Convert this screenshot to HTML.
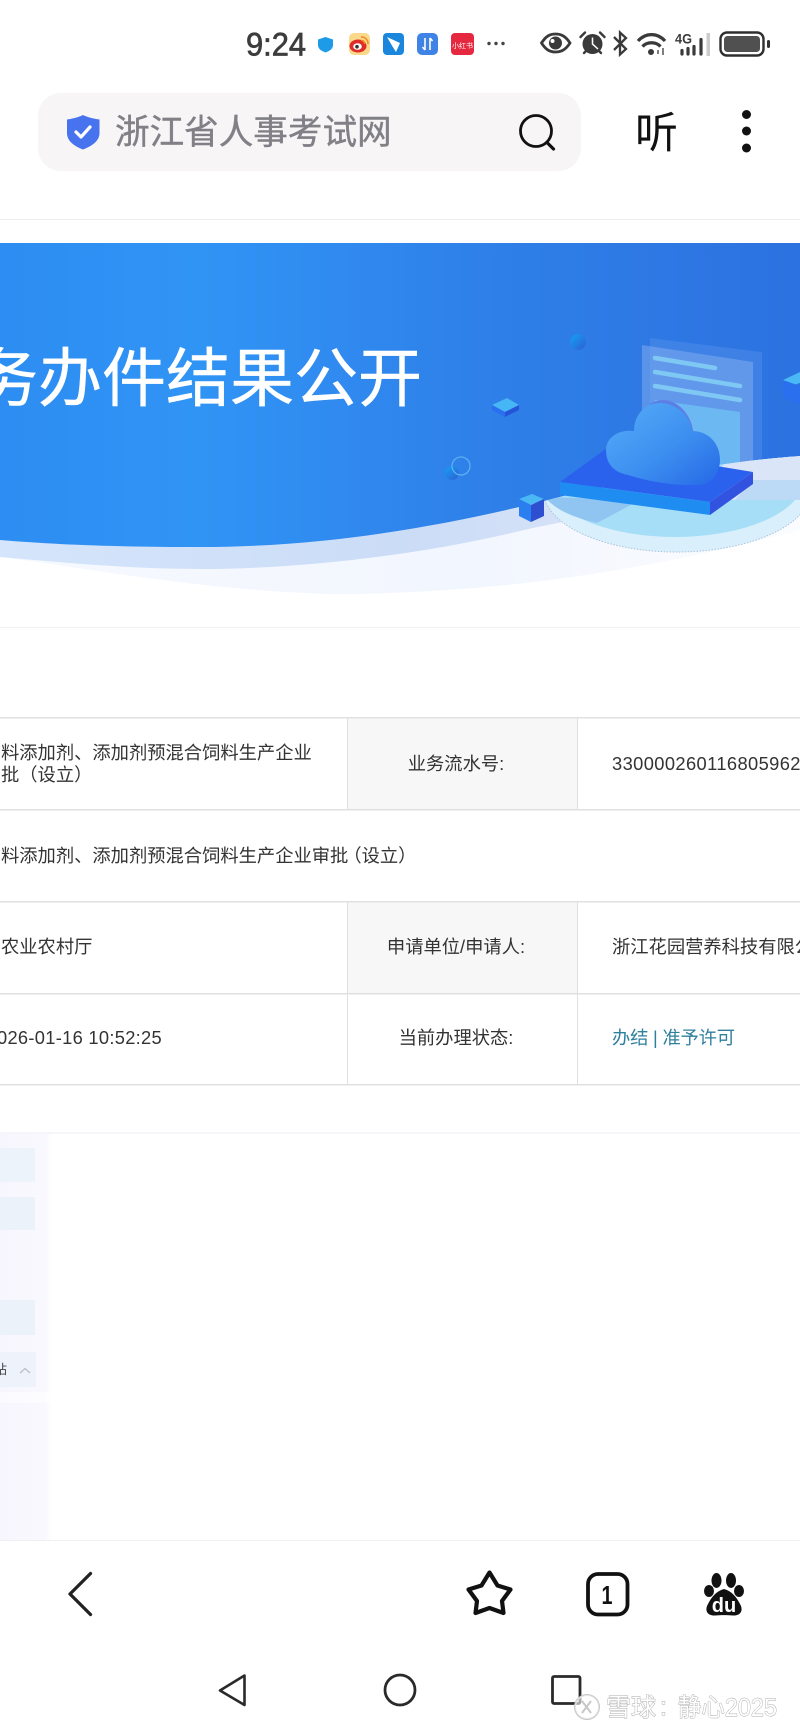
<!DOCTYPE html>
<html lang="zh-CN"><head><meta charset="utf-8"><title>浙江省人事考试网</title>
<style>html,body{margin:0;padding:0;background:#fff;width:800px;height:1732px;overflow:hidden}
svg{display:block}text{font-family:"Liberation Sans","Noto Sans CJK SC",sans-serif}</style></head>
<body>
<svg width="800" height="1732" viewBox="0 0 800 1732" xmlns="http://www.w3.org/2000/svg">
<defs>
<linearGradient id="bl" x1="0" x2="1" y1="0" y2="0"><stop offset="0" stop-color="#2d8df2"/><stop offset=".25" stop-color="#3094f5"/><stop offset=".6" stop-color="#2f80e9"/><stop offset="1" stop-color="#2c72e0"/></linearGradient>
<linearGradient id="cl" x1="0" x2="1" y1="0" y2="1"><stop offset="0" stop-color="#56aef7"/><stop offset=".55" stop-color="#3d8ff0"/><stop offset="1" stop-color="#2568e6"/></linearGradient>
<linearGradient id="lav" x1="0" x2="1" y1="0" y2="0"><stop offset="0" stop-color="#d5e5fb"/><stop offset=".5" stop-color="#cbdcf7"/><stop offset="1" stop-color="#e2e9f8"/></linearGradient>
<linearGradient id="pale" x1="0" x2="1" y1="0" y2="0"><stop offset="0" stop-color="#f6f9ff"/><stop offset=".6" stop-color="#f2f6fe"/><stop offset="1" stop-color="#fbfcff"/></linearGradient>
<linearGradient id="side" x1="0" x2="1" y1="0" y2="0"><stop offset="0" stop-color="#f7f6fe"/><stop offset=".88" stop-color="#f9f8fe"/><stop offset="1" stop-color="#fff"/></linearGradient>
<linearGradient id="ball" x1="0" x2="1" y1="0" y2="1"><stop offset="0" stop-color="#14a0f4"/><stop offset="1" stop-color="#2f5fd4"/></linearGradient>
<clipPath id="cb"><path d="M0 243H800V456C720 462 650 475 560 497C450 525 330 547 200 547C120 547 60 545 0 540Z"/></clipPath>
<clipPath id="cr"><path d="M0 800H800V456C720 462 650 475 560 497C450 525 330 547 200 547C120 547 60 545 0 540Z"/></clipPath>
</defs>

<!-- status bar -->
<text x="246" y="55.500" font-size="32" fill="#3c3c3c" stroke="#3c3c3c" stroke-width=".7" textLength="60" lengthAdjust="spacingAndGlyphs">9:24</text>
<path d="M325.500 37L333 39.500V45C333 49 329.500 51 325.500 52.500C321.500 51 318 49 318 45V39.500Z" fill="#1e9be8"/>
<rect x="349" y="33" width="21" height="22" rx="5" fill="#fbd98a"/>
<ellipse cx="358" cy="46" rx="8.500" ry="6.500" fill="#df2d2a"/><ellipse cx="357.500" cy="46.500" rx="4.300" ry="3.300" fill="#fff"/><circle cx="357" cy="46.700" r="1.800" fill="#333"/>
<path d="M361 37A6.500 6.500 0 0 1 368 44M361 40.500A3 3 0 0 1 364.500 44" fill="none" stroke="#f08a20" stroke-width="1.500"/>
<rect x="383" y="33" width="21" height="22" rx="4" fill="#1a86dc"/><path d="M387 37L400 43L396 52L392.500 46.500Z" fill="#fff"/>
<rect x="417" y="33" width="21" height="22" rx="5" fill="#3f83e6"/><path d="M425 38V50M425 50L422.500 47M430 50V38M430 38L432.500 41" fill="none" stroke="#fff" stroke-width="1.600"/>
<rect x="451" y="33" width="23" height="22" rx="4" fill="#e5283f"/><text x="462.500" y="48" font-size="7" fill="#fff" text-anchor="middle">小红书</text>
<circle cx="489" cy="43.500" r="1.700" fill="#444"/><circle cx="496" cy="43.500" r="1.700" fill="#444"/><circle cx="503" cy="43.500" r="1.700" fill="#444"/>
<path d="M541.500 43C546 36 550 34 555.500 34C561 34 565.500 36 570 43C565.500 50 561 52 555.500 52C550 52 546 50 541.500 43Z" fill="none" stroke="#3a3a3a" stroke-width="2.800"/><circle cx="555.500" cy="43" r="6.500" fill="#3a3a3a"/><circle cx="552.500" cy="41" r="2" fill="#fff"/>
<circle cx="592.500" cy="44" r="10" fill="#3a3a3a"/><path d="M592.500 37.500V44L598 49" fill="none" stroke="#fff" stroke-width="1.500"/><path d="M580.500 37L585 32.500M604.500 37L600 32.500M584 53L586.500 50.500M601 53L598.500 50.500" stroke="#3a3a3a" stroke-width="2.400" stroke-linecap="round"/>
<path d="M614 37L626 49L620 54.500V32.500L626 38L614 50" fill="none" stroke="#3a3a3a" stroke-width="2.300"/>
<path d="M638 41C645.500 32.500 657.500 32.500 665 41M642.500 46.500C647 41.500 656 41.500 660.500 46.500" fill="none" stroke="#3a3a3a" stroke-width="3.200"/><circle cx="651" cy="52" r="3" fill="#3a3a3a"/><path d="M658 50V54M663 48V55" stroke="#3a3a3a" stroke-width="1.300"/>
<text x="675" y="43.500" font-size="14" fill="#3a3a3a" font-weight="700" textLength="17" lengthAdjust="spacingAndGlyphs">4G</text>
<path d="M682 50.500V54M688 48.500V54M694 46.500V54M701 39.500V54" stroke="#3a3a3a" stroke-width="3.200" stroke-linecap="round"/>
<rect x="706.500" y="33" width="3.500" height="23" fill="#ccc"/>
<rect x="720.500" y="32.500" width="43" height="23" rx="6.500" fill="none" stroke="#2f2f2f" stroke-width="2.400"/><rect x="724" y="36" width="36" height="16" rx="3.500" fill="#505050"/><rect x="767" y="40" width="3" height="8" rx="1.500" fill="#333"/>

<!-- top bar -->
<rect x="38" y="93" width="543" height="78" rx="23" fill="#f7f5f6"/>
<path d="M83 115C87 117 92 118.500 99.500 119.500V133C99.500 141 92 146 83 149.500C74 146 67 141 67 133V119.500C74 118.500 79 117 83 115Z" fill="#4873ee"/>
<path d="M76 132L81 137L90 127" fill="none" stroke="#fff" stroke-width="3.200" stroke-linecap="round" stroke-linejoin="round"/>
<text x="115" y="144" font-size="34.600" fill="#808086" stroke="#808086" stroke-width=".4">浙江省人事考试网</text>
<circle cx="536" cy="131" r="15.500" fill="none" stroke="#111" stroke-width="2.800"/><path d="M547.500 143L553.500 149" stroke="#111" stroke-width="3.200" stroke-linecap="round"/>
<text x="635" y="148" font-size="43" fill="#111">听</text>
<circle cx="746.500" cy="114.500" r="4.500" fill="#111"/><circle cx="746.500" cy="131" r="4.500" fill="#111"/><circle cx="746.500" cy="148" r="4.500" fill="#111"/>
<rect x="0" y="219" width="800" height="1" fill="#eeeeee"/>

<!-- banner -->
<path d="M0 500H800V530C650 570 500 594 330 594C200 590 100 570 0 557Z" fill="url(#pale)"/>
<path d="M0 500H800V490C720 500 600 512 520 531C420 555 300 569 200 569C130 569 70 563 0 557Z" fill="url(#lav)"/>
<path d="M0 243H800V456C720 462 650 475 560 497C450 525 330 547 200 547C120 547 60 545 0 540Z" fill="url(#bl)"/>
<g clip-path="url(#cb)">
<path d="M650 338L762 352V480H650Z" fill="#5b93ea" opacity=".4"/>
<path d="M642 345L753 362V480H642Z" fill="#7fabef" opacity=".55"/>
<path d="M655 358L715 368M655 372L740 386M655 386L740 400" stroke="#7fc8f4" stroke-width="4.500" stroke-linecap="round"/>
<path d="M655 400L740 412V480H655Z" fill="#6cb8f2"/>
</g>
<text x="-26" y="401" font-size="64" fill="#fff" stroke="#fff" stroke-width=".5">务办件结果公开</text>
<g clip-path="url(#cr)">
<ellipse cx="677" cy="490" rx="134" ry="62" fill="#d9effb" stroke="#a8c4dc" stroke-width="1" stroke-dasharray="1.500 1.500"/>
<ellipse cx="675" cy="480" rx="128" ry="57" fill="#a6def8"/>
<path d="M545 497L640 500L597 523C575 518 555 510 545 497Z" fill="#8fc5f0"/>
<path d="M725 462L800 456V490L790 500H740L700 500Z" fill="#dbe5f8"/>
<path d="M753 480H800V500H735Z" fill="#bcd9f5"/>
</g>
<path d="M560 482L607 448L753 472L710 502Z" fill="#2a62ee"/>
<path d="M560 482L710 502V515L560 495Z" fill="#1f8cf2"/>
<path d="M710 502L753 472V484L710 515Z" fill="#3252e0"/>
<path d="M650 404C670 392 690 410 693 430L700 470H640Z" fill="#5c7fe6"/>
<path d="M628 475C612 472 606 462 606 450C606 438 618 429 634 431C634 414 646 403 660 403C676 403 690 416 692 431C708 431 720 443 720 460C720 472 712 484 700 485C675 486 650 482 628 475Z" fill="url(#cl)"/>
<circle cx="578" cy="342" r="8" fill="url(#ball)"/>
<path d="M492 405L507 398L519 405L505 412Z" fill="#47b6f5"/><path d="M492 405L505 412V417L492 410Z" fill="#2a6ff0"/><path d="M505 412L519 405V410L505 417Z" fill="#2554d8"/>
<circle cx="452" cy="473" r="7" fill="url(#ball)"/><circle cx="461" cy="466" r="9" fill="none" stroke="#5ab0f0" stroke-width="1.300"/>
<path d="M519 499L532 494L544 499L531 505Z" fill="#4ab8f5"/><path d="M519 499L531 505V522L519 516Z" fill="#2a7ef0"/><path d="M531 505L544 499V516L531 522Z" fill="#2d4fd0"/>
<path d="M783 380L800 372V383L790 386Z" fill="#4ab8f5"/><path d="M783 380L800 386V404L783 398Z" fill="#2a70ee"/>

<rect x="0" y="627" width="800" height="1" fill="#f1f1f1"/>

<!-- table -->
<rect x="347" y="718" width="230" height="91" fill="#f7f7f7"/>
<rect x="347" y="902" width="230" height="91" fill="#f7f7f7"/>
<g fill="#e0e0e0">
<rect x="0" y="717" width="800" height="1.500"/><rect x="0" y="809" width="800" height="1.500"/><rect x="0" y="901" width="800" height="1.500"/><rect x="0" y="993" width="800" height="1.500"/><rect x="0" y="1084" width="800" height="1.500"/>
<rect x="347" y="717" width="1" height="92"/><rect x="577" y="717" width="1" height="92"/>
<rect x="347" y="901" width="1" height="184"/><rect x="577" y="901" width="1" height="184"/>
</g>
<g font-size="18.300" fill="#333">
<text x="1" y="759">料添加剂、添加剂预混合饲料生产企业</text>
<text x="1" y="781">批（设立）</text>
<text x="1" y="862">料添加剂、添加剂预混合饲料生产企业审批<tspan dx="-5">（设立）</tspan></text>
<text x="1" y="953">农业农村厅</text>
<text x="-3" y="1044" letter-spacing=".3">026-01-16 10:52:25</text>
<text x="456" y="770" text-anchor="middle">业务流水号:</text>
<text x="456" y="953" text-anchor="middle">申请单位/申请人:</text>
<text x="456" y="1044" text-anchor="middle">当前办理状态:</text>
<text x="612" y="770" letter-spacing=".4">330000260116805962</text>
<text x="612" y="953">浙江花园营养科技有限公司</text>
<text x="612" y="1044" fill="#2f7f9f" letter-spacing="-.2">办结 | 准予许可</text>
</g>

<!-- lower section -->
<rect x="0" y="1132" width="800" height="2" fill="#f5f5fa"/>
<rect x="0" y="1134" width="52" height="406" fill="url(#side)"/>
<rect x="0" y="1148" width="35" height="34" fill="#ecf3fa"/>
<rect x="0" y="1197" width="35" height="33" fill="#ebf2fa"/>
<rect x="0" y="1300" width="35" height="35" fill="#ebf2fa"/>
<rect x="0" y="1352" width="36" height="35" fill="#eef3fb"/>
<text x="-6" y="1374" font-size="13" fill="#444">站</text>
<path d="M20 1373L25 1368.500L30 1373" fill="none" stroke="#b9bcc6" stroke-width="1.200"/>
<rect x="0" y="1392" width="52" height="11" fill="#fff" opacity=".5"/>
<rect x="0" y="1540" width="800" height="1" fill="#f0f0f0"/>

<!-- bottom toolbar -->
<path d="M90.500 1573.500L70 1594L90.500 1614.500" fill="none" stroke="#222" stroke-width="3.300" stroke-linecap="round" stroke-linejoin="round"/>
<path d="M489.500 1572.500L497.500 1585.500L510.500 1589.500L502 1601L503.500 1613L489.500 1608L475.500 1613L477 1601L468.500 1589.500L481.500 1585.500Z" fill="none" stroke="#111" stroke-width="4.200" stroke-linejoin="round"/>
<rect x="588" y="1574" width="39.500" height="40.500" rx="10" fill="none" stroke="#111" stroke-width="3.800"/>
<text x="607" y="1604" font-size="26" font-weight="700" fill="#111" text-anchor="middle" textLength="11" lengthAdjust="spacingAndGlyphs">1</text>
<ellipse cx="716.500" cy="1580.500" rx="5" ry="7.500" fill="#111"/><ellipse cx="731" cy="1580.500" rx="5" ry="7.500" fill="#111"/>
<ellipse cx="709" cy="1591" rx="5" ry="6" fill="#111"/><ellipse cx="739" cy="1591" rx="5" ry="6" fill="#111"/>
<path d="M724 1589C716 1591 711 1598 708 1604C704 1611 708 1616 715 1615.500C720 1615 728 1615 733 1615.500C740 1616 744 1611 740 1604C737 1598 732 1591 724 1589Z" fill="#111"/>
<text x="724" y="1612" font-size="20" font-weight="700" fill="#fff" text-anchor="middle">du</text>

<!-- nav -->
<path d="M244.500 1675.500L220 1690.500L244.500 1705Z" fill="none" stroke="#2a2a2a" stroke-width="2.600" stroke-linejoin="round"/>
<ellipse cx="400" cy="1690" rx="15" ry="15" fill="none" stroke="#2a2a2a" stroke-width="2.800"/>
<rect x="552.500" y="1676.500" width="27.500" height="27" rx="1.500" fill="none" stroke="#2a2a2a" stroke-width="2.800"/>

<!-- watermark -->
<g stroke="#a8a8a8" stroke-width=".9" fill="#fff" paint-order="stroke" font-size="25">
<circle cx="587" cy="1707" r="12" fill="#fff" fill-opacity=".6" stroke="#c8c8c8" stroke-width="2"/>
<path d="M582 1701L591 1713M591 1701L582 1713" fill="none" stroke="#c8c8c8" stroke-width="2"/>
<text x="606" y="1716">雪球</text>
<text x="660" y="1715">:</text>
<text x="678" y="1716" textLength="99" lengthAdjust="spacingAndGlyphs">静心2025</text>
</g>
</svg>
</body></html>
